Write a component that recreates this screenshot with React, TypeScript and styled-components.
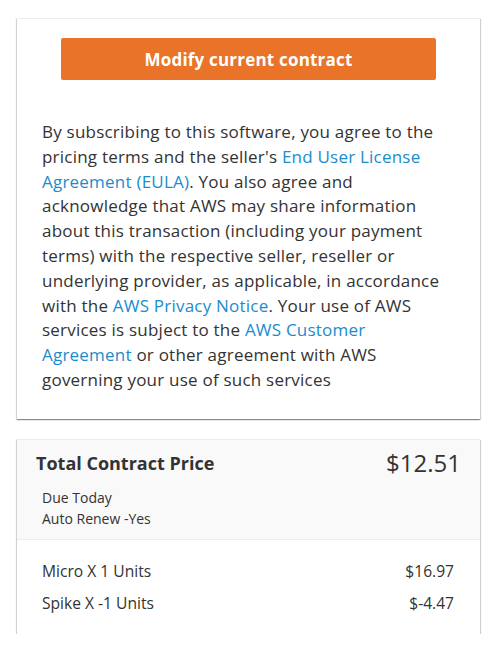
import React from "react";
import styled, { createGlobalStyle } from "styled-components";

const Global = createGlobalStyle`
  html, body { margin: 0; padding: 0; background: #ffffff; }
  body { font-family: "Open Sans", "Noto Sans", sans-serif; color: #333333; }
`;

const Page = styled.div`
  width: 500px;
  padding: 18px 20px 0 17px;
  box-sizing: border-box;
  display: flex;
  flex-direction: column;
  gap: 20px;
`;

const Card = styled.section`
  background: #ffffff;
  border-top: 1px solid #eaeded;
  box-shadow: 0 1px 1px 0 rgba(0, 28, 36, 0.3), 1px 1px 1px 0 rgba(0, 28, 36, 0.15),
    -1px 1px 1px 0 rgba(0, 28, 36, 0.15);
  box-sizing: border-box;
`;

const TermsBody = styled.div`
  display: flex;
  flex-direction: column;
  align-items: center;
  padding: 19px 25px 26px 25px;
  gap: 40px;
`;

const PrimaryButton = styled.button`
  width: 375px;
  height: 42px;
  border: none;
  border-radius: 2px;
  background: #e97328;
  color: #ffffff;
  font-family: "Open Sans", "Noto Sans", sans-serif;
  font-weight: 700;
  font-size: 17px;
  letter-spacing: 0.2px;
  cursor: pointer;
`;

const Terms = styled.p`
  margin: 0;
  font-size: 17px;
  letter-spacing: 0.22px;
  line-height: 24.8px;
  color: #333333;
  align-self: stretch;
`;

const Link = styled.a`
  color: #1b8ccc;
  text-decoration: none;
`;

const PriceHeader = styled.div`
  background: #f9f9f9;
  border-bottom: 1px solid #eaeded;
  padding: 8px 19px 9px 19px;
  display: flex;
  flex-direction: column;
`;

const TitleRow = styled.div`
  display: flex;
  justify-content: space-between;
  align-items: center;
  height: 30px;
`;

const Title = styled.h2`
  margin: 0;
  font-size: 18px;
  font-weight: 700;
  color: #333333;
`;

const Total = styled.div`
  font-size: 24px;
  color: #333333;
`;

const Meta = styled.div`
  padding: 9px 0 0 6px;
  font-size: 14px;
  line-height: 21.5px;
  color: #333333;
`;

const Lines = styled.div`
  padding: 15px 26px 15px 25px;
  display: flex;
  flex-direction: column;
`;

const LineRow = styled.div`
  display: flex;
  justify-content: space-between;
  font-size: 15.6px;
  line-height: 32px;
  color: #333333;
`;

const items = [
  { label: "Micro X 1 Units", price: "$16.97" },
  { label: "Spike X -1 Units", price: "$-4.47" },
];

export default function App() {
  return (
    <>
      <Global />
      <Page>
        <Card>
          <TermsBody>
            <PrimaryButton>Modify current contract</PrimaryButton>
            <Terms>
              By subscribing to this software, you agree to the pricing terms and the seller's{" "}
              <Link href="#">End User License Agreement (EULA)</Link>. You also agree and
              acknowledge that AWS may share information about this transaction (including your
              payment terms) with the respective seller, reseller or underlying provider, as
              applicable, in accordance with the <Link href="#">AWS Privacy Notice</Link>. Your use
              of AWS services is subject to the <Link href="#">AWS Customer Agreement</Link> or
              other agreement with AWS governing your use of such services
            </Terms>
          </TermsBody>
        </Card>
        <Card>
          <PriceHeader>
            <TitleRow>
              <Title>Total Contract Price</Title>
              <Total>$12.51</Total>
            </TitleRow>
            <Meta>
              <div>Due Today</div>
              <div>Auto Renew -Yes</div>
            </Meta>
          </PriceHeader>
          <Lines>
            {items.map((it) => (
              <LineRow key={it.label}>
                <span>{it.label}</span>
                <span>{it.price}</span>
              </LineRow>
            ))}
          </Lines>
        </Card>
      </Page>
    </>
  );
}
